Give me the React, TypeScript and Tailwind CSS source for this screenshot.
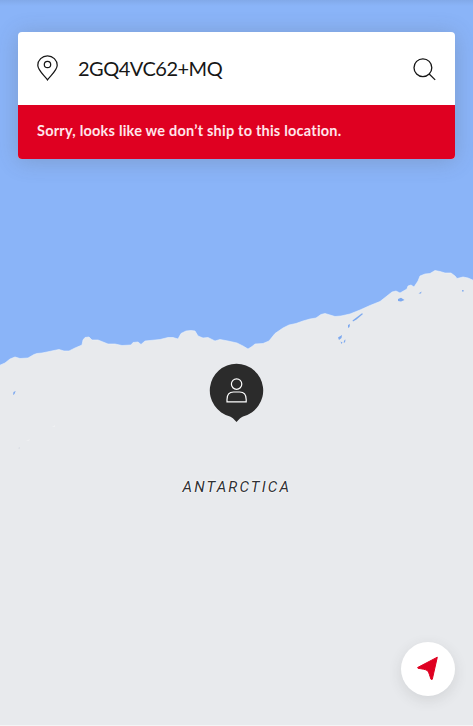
import React from "react";

function Coast() {
  return (
    <svg className="absolute inset-0 h-full w-full" viewBox="0 0 473 726" aria-hidden="true">
      <path
        fill="#e8eaed"
        stroke="#eef3f9"
        strokeWidth="0.6"
        d="M-2 366 L5 363 L10 359 L15 357 L20 358.5 L28 358 L34 354.5 L37 353.5 L42 353 L47 352 L54 350.5 L59 349.5 L64 351 L69 351 L75 348 L82 345 L83 340 L85 337.5 L89 337 L92 340 L98 340 L103 342 L108 344 L115 344 L122 345.500 L131 345 L133 342.500 L138 342 L141 344.500 L145 341 L150 340.500 L160 339.500 L168 337.500 L173 337.500 L178 339 L181 333.500 L186 331 L191 330.500 L195 331 L198 336 L203 338 L208 337.500 L215 341 L220 339.500 L228 341 L237 343 L243 346 L248 349 L252 346.500 L255 344 L263 343.500 L269 341 L275 333.500 L283 328 L289 325 L296 323.500 L303 321 L310 319 L316 318 L321 314.500 L325 313.500 L330 315 L335 316.500 L341 316 L350 314 L360 310 L370 305.500 L380 301.500 L387 296 L392 292 L396 291 L400 293 L407 289 L408 286 L411 285 L414 287 L418 281 L420 276 L425 274 L430 273.500 L435 270.500 L440 271.500 L445 273 L451 273 L455 276 L457 278.500 L463 277 L468 278 L475 281 V728 H-2 Z"
      />
      <g fill="#7da9ef">
        <path d="M352.500 320.500 L362 313.300 L363 314 L356.500 319.500 L353 321.500 Z" />
        <path d="M348 325 L350 324 L349.500 327 L348 328 Z M338 337.500 L342 335 L341.500 338 L339 340 Z M340.500 341.500 L342.500 342.500 L341.500 344 Z M344.500 340 L345.500 339.500 L345 342.500 L343.500 342.500 Z" />
        <path d="M398 299 L401 297.800 L404.500 300 L401 301.500 L398 301 Z M418.500 293.500 L421.500 291.500 L421 293.500 Z M462 290 L464 290.500 L463.500 291.500 L462 291.500 Z M13.500 392 L15.700 391 L14.500 394 L13 395 Z" />
      </g>
      <g fill="#eff0f2">
        <path d="M52 427 l3 -2 v2 z M26 441 l4 -2 -1 2 z" />
      </g>
      <path fill="#d9dde4" d="M18 448 l2 -1 v1.500 l-1 0.500 z" />
    </svg>
  );
}

function SearchCard() {
  return (
    <section className="relative mx-[18px] overflow-hidden rounded-[4px] bg-white shadow-[0_2px_22px_rgba(80,80,80,0.24)]">
      <div className="flex h-[73px] items-center pr-[19px] pl-[19px]">
        <svg className="mb-px h-[26px] w-[21px]" viewBox="0 0 21 26" fill="none" stroke="#171717" strokeWidth="1.25">
          <path d="M10.500 24.900 C8.200 21.200 0.800 15.700 0.800 10.300 A9.700 9.500 0 0 1 20.200 10.300 C20.200 15.700 12.800 21.200 10.500 24.900 Z" />
          <circle cx="10.500" cy="9.500" r="3.200" />
        </svg>
        <span className="mb-[2px] ml-[20px] flex-1 whitespace-nowrap font-['Lato',sans-serif] text-[20px] leading-[28px] tracking-[-0.5px] text-[#171717]">
          2GQ4VC62+MQ
        </span>
        <svg className="mt-px h-[23px] w-[23px]" viewBox="0 0 23 23" fill="none" stroke="#171717" strokeWidth="1.3">
          <circle cx="9.900" cy="9.700" r="8.900" />
          <path d="M16.200 16 L22.200 21.900" />
        </svg>
      </div>
      <p className="flex h-[54px] items-center bg-[#df0021] px-[19px] pb-[2px] font-['Lato',sans-serif] text-[14.5px] font-bold tracking-[0.22px] whitespace-nowrap text-[#ffe5ea]">
        Sorry, looks like we don’t ship to this location.
      </p>
    </section>
  );
}

export default function App() {
  return (
    <main className="relative flex h-[726px] w-[473px] flex-col overflow-hidden bg-[#8ab4f8] pt-8">
      <Coast />
      <div className="absolute inset-x-0 top-0 h-[6px] bg-gradient-to-b from-black/6 to-transparent" />
      <SearchCard />
      <svg className="absolute top-[363px] left-[209px] h-[60px] w-[55px]" viewBox="0 0 55 60">
        <path fill="#2b2b2b" d="M27.500 0.800 A26.700 26.700 0 0 1 34 53.400 Q31.500 54.200 27.500 59 Q23.500 54.200 21 53.400 A26.700 26.700 0 0 1 27.500 0.800 Z" />
        <g fill="none" stroke="#fff" strokeWidth="1.2">
          <circle cx="27.600" cy="21.100" r="5.200" />
          <path d="M18 38.800 V36.500 Q18 29 24.500 29 H30.700 Q37.200 29 37.200 36.500 V38.800 Z" />
        </g>
      </svg>
      <span className="absolute top-[477px] left-[182.5px] font-['Roboto',sans-serif] text-[15px] leading-5 tracking-[2.15px] whitespace-nowrap text-[#303134] italic [text-shadow:0_0_2px_#fff,0_0_2px_#fff,0_0_1px_#fff]">
        ANTARCTICA
      </span>
      <button className="relative mt-auto mr-[18px] mb-[30px] flex h-[54px] w-[54px] items-center justify-center self-end rounded-full bg-white shadow-[0_4px_14px_rgba(60,60,60,0.12)]">
        <svg className="mb-[2px] h-6 w-6" viewBox="0 0 24 24" aria-label="Locate me">
          <path fill="#df0021" stroke="#df0021" strokeWidth="1" strokeLinejoin="round" d="M21.300 1.200 L1.600 11.500 L2 12.300 C6 13 9.500 13.200 11.500 14.700 C13 16 13.700 20 15 23.300 L16.300 23.300 Z" />
        </svg>
      </button>
      <div className="absolute inset-x-0 bottom-0 h-px bg-[#f4f5f6]" />
    </main>
  );
}
